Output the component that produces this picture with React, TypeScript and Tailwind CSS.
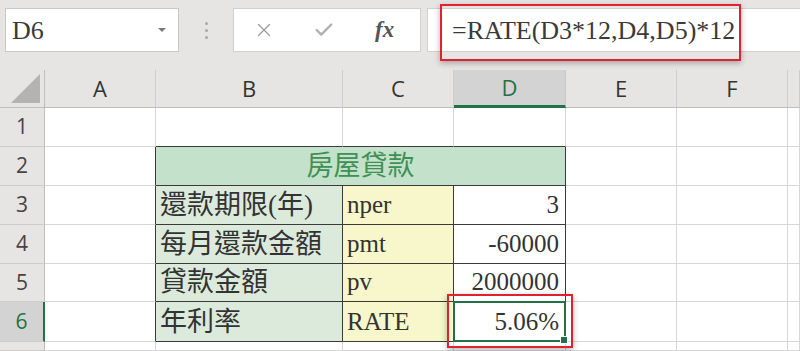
import { X, Check } from "lucide-react";

const serif = "font-['Liberation_Serif','Noto_Sans_CJK_TC',serif]";
const letters = ["A", "B", "C", "D", "E", "F", ""];

const rows = [
  { n: 3, label: "還款期限(年)", arg: "nper", value: "3" },
  { n: 4, label: "每月還款金額", arg: "pmt", value: "-60000" },
  { n: 5, label: "貸款金額", arg: "pv", value: "2000000" },
  { n: 6, label: "年利率", arg: "RATE", value: "5.06%" },
];

function FormulaBar() {
  return (
    <div className="flex h-[70px] items-start pt-2 pl-[5px]">
      <div className="flex h-[44px] w-[174px] items-center justify-between border border-[#c8c8c8] bg-white pl-[6px] pr-[12px]">
        <span className={`${serif} text-[26px] text-[#3a3a3a]`}>D6</span>
        <span className="h-0 w-0 border-x-[4px] border-t-[4px] border-x-transparent border-t-[#7a7a7a]" />
      </div>
      <div className="flex h-[44px] w-[54px] flex-col items-center justify-center gap-[4px]">
        <span className="h-[3px] w-[3px] rounded-full bg-[#a8a8a8]" />
        <span className="h-[3px] w-[3px] rounded-full bg-[#a8a8a8]" />
        <span className="h-[3px] w-[3px] rounded-full bg-[#a8a8a8]" />
      </div>
      <div className="flex h-[44px] w-[188px] items-center border border-[#d0d0d0] bg-white">
        <X className="ml-[19px] h-[22px] w-[22px] text-[#9c9c9c]" strokeWidth={1.4} />
        <Check className="ml-[38px] h-[22px] w-[22px] text-[#b0b0b0]" strokeWidth={2.6} />
        <span className="ml-[40px] font-['Liberation_Serif',serif] text-[23px] font-bold italic text-[#555]">fx</span>
      </div>
      <div className="ml-[6px] flex h-[44px] flex-1 items-center border-y border-l border-[#d0d0d0] bg-white pl-[24px]">
        <span className={`${serif} text-[26px] text-[#3a3a3a]`}>=RATE(D3*12,D4,D5)*12</span>
      </div>
    </div>
  );
}

function RowHead({ n }: { n?: number }) {
  const sel = n === 6;
  return (
    <div
      className={`flex items-center justify-center border-b border-[#cdcdcd] font-['Open_Sans',sans-serif] text-[21px] ${
        sel ? "border-r-[2px] border-r-[#217346] bg-[#d3d3d3] text-[#217346]" : "border-r border-r-[#bdbdbd] bg-[#e6e5e4] text-[#444]"
      }`}
    >
      {n}
    </div>
  );
}

function Blank({ dark }: { dark?: "r" | "b" }) {
  return (
    <div
      className={`bg-white ${
        dark === "r"
          ? "border-b border-r border-b-[#d6d6d6] border-r-[#3a3a3a]"
          : dark === "b"
          ? "border-b border-r border-b-[#3a3a3a] border-r-[#d6d6d6]"
          : "border-b border-r border-[#d6d6d6]"
      }`}
    />
  );
}

export default function App() {
  return (
    <div className="relative h-[351px] w-[800px] overflow-hidden bg-[#e6e5e4]">
      <FormulaBar />

      <div className="grid grid-cols-[45px_111px_187px_111px_112px_111px_111px_12px] grid-rows-[38px_39px_39px_39px_39px_38px_40px_9px]">
        {/* column headers */}
        <div className="relative border-b border-r border-[#bdbdbd] bg-[#e6e5e4]">
          <div className="absolute bottom-[4px] right-[4px] h-0 w-0 border-b-[29px] border-l-[29px] border-b-[#b5b3b2] border-l-transparent" />
        </div>
        {letters.map((l, i) => (
          <div
            key={i}
            className={`flex items-center justify-center font-['Open_Sans',sans-serif] text-[22px] ${
              l === "D"
                ? "border-b-[3px] border-r border-b-[#217346] border-r-[#c8c8c8] bg-[#d3d3d3] text-[#217346]"
                : "border-b border-r border-b-[#bdbdbd] border-r-[#cdcdcd] bg-[#e6e5e4] text-[#333]"
            }`}
          >
            {l}
          </div>
        ))}

        {/* row 1 */}
        <RowHead n={1} />
        <Blank />
        <Blank dark="b" />
        <Blank dark="b" />
        <Blank dark="b" />
        <Blank />
        <Blank />
        <Blank />

        {/* row 2 */}
        <RowHead n={2} />
        <Blank dark="r" />
        <div className="col-span-3 flex items-end justify-center border-b border-r border-[#3a3a3a] bg-[#c4e1cb] pb-[2px]">
          <span className={`${serif} text-[27px] leading-[34px] text-[#3f9153]`}>房屋貸款</span>
        </div>
        <Blank />
        <Blank />
        <Blank />

        {/* rows 3-6 */}
        {rows.map((r) => (
          <div key={r.n} className="contents">
            <RowHead n={r.n} />
            <Blank dark="r" />
            <div className="flex items-end border-b border-r border-[#3a3a3a] bg-[#dceadb] pb-[2px] pl-[4px]">
              <span className={`${serif} text-[27px] leading-[34px] text-[#333]`}>{r.label}</span>
            </div>
            <div className="flex items-end border-b border-r border-[#3a3a3a] bg-[#f7f7cb] pb-[2px] pl-[4px]">
              <span className={`${serif} text-[25px] leading-[34px] text-[#333]`}>{r.arg}</span>
            </div>
            <div className="relative flex items-end justify-end border-b border-r border-[#3a3a3a] bg-white pb-[2px] pr-[6px]">
              <span className={`${serif} text-[25px] leading-[34px] text-[#333]`}>{r.value}</span>
              {r.n === 6 && (
                <>
                  <div className="absolute -left-[1px] -top-[1px] h-[41px] w-[113px] border-2 border-[#217346]" />
                  <div className="absolute -bottom-[3px] -right-[3px] h-[8px] w-[8px] border border-white bg-[#217346]" />
                </>
              )}
            </div>
            <Blank />
            <Blank />
            <Blank />
          </div>
        ))}

        {/* row 7 */}
        <RowHead />
        <Blank />
        <Blank />
        <Blank />
        <Blank />
        <Blank />
        <Blank />
        <Blank />
      </div>

      {/* red highlight boxes */}
      <div className="absolute left-[440px] top-[4px] h-[57px] w-[301px] border-2 border-[#e0212f] shadow-[0_2px_6px_rgba(0,0,0,0.3)]" />
      <div className="absolute left-[447px] top-[294px] h-[54px] w-[126px] border-2 border-[#e0212f] shadow-[0_2px_6px_rgba(0,0,0,0.3)]" />
    </div>
  );
}
